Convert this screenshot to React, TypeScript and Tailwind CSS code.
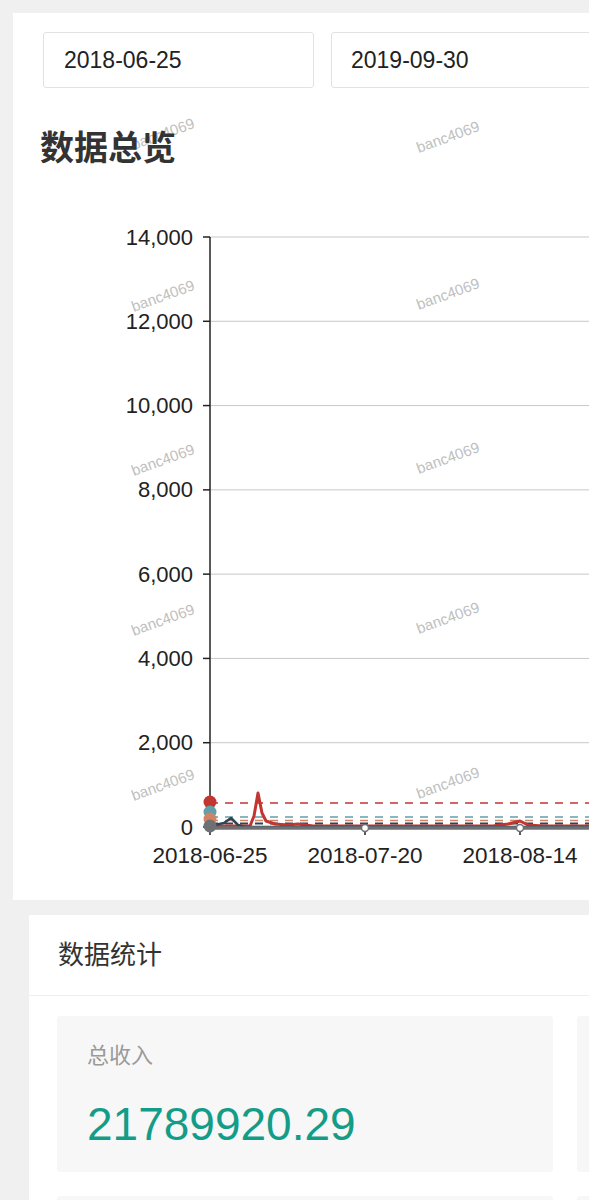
const font = "font-['Liberation_Sans','Noto_Sans_CJK_SC',sans-serif]";

const yTicks = [0, 2000, 4000, 6000, 8000, 10000, 12000, 14000];
const xLabels = ['2018-06-25', '2018-07-20', '2018-08-14'];

// chart geometry (svg coords)
const X0 = 197;
const Y0 = 661;
const PER = 590 / 14000;
const yOf = (v: number) => Y0 - v * PER;

const marks = [
  'left-[117px] top-[112px]',
  'left-[402px] top-[115px]',
  'left-[117px] top-[274px]',
  'left-[402px] top-[272px]',
  'left-[117px] top-[438px]',
  'left-[402px] top-[436px]',
  'left-[117px] top-[598px]',
  'left-[402px] top-[596px]',
  'left-[117px] top-[763px]',
  'left-[402px] top-[761px]',
];

function Chart() {
  return (
    <svg width={1000} height={734} className="-ml-[30px] block" fontFamily="Liberation Sans, Arial, sans-serif">
      {yTicks.map((v) => (
        <g key={v}>
          {v > 0 && <line x1={X0} x2={1000} y1={yOf(v)} y2={yOf(v)} stroke="#c8c8c8" strokeWidth={1} />}
          <line x1={X0 - 7} x2={X0} y1={yOf(v)} y2={yOf(v)} stroke="#222" strokeWidth={1.5} />
          <text x={180} y={yOf(v)} textAnchor="end" dominantBaseline="central" fontSize={22} fill="#222">
            {v.toLocaleString('en-US')}
          </text>
        </g>
      ))}

      {/* average lines */}
      <line x1={X0} x2={1000} y1={637} y2={637} stroke="#c23531" strokeWidth={1.5} strokeDasharray="8 7" />
      <line x1={X0} x2={1000} y1={651} y2={651} stroke="#61a0a8" strokeWidth={1.5} strokeDasharray="8 7" />
      <line x1={X0} x2={1000} y1={654.5} y2={654.5} stroke="#d48265" strokeWidth={1.5} strokeDasharray="8 7" />
      <line x1={X0} x2={1000} y1={657.5} y2={657.5} stroke="#2f4554" strokeWidth={2} strokeDasharray="8 7" />

      {/* series */}
      <path d="M197,660 L237,660 L241,650 L245,627 L249,647 L253,655 L262,658 L275,659 L285,658 L300,660 L480,660 L495,658 L507,655 L515,659 L530,660 L1000,660" fill="none" stroke="#c23531" strokeWidth={3} strokeLinejoin="round" />
      <path d="M197,660 L211,657 L218,652 L225,659 L232,661 L1000,661" fill="none" stroke="#2f4554" strokeWidth={2.5} strokeLinejoin="round" />
      <line x1={X0} x2={1000} y1={Y0 + 1} y2={Y0 + 1} stroke="#6e7074" strokeWidth={3.5} />

      {/* y axis */}
      <line x1={X0} x2={X0} y1={yOf(14000)} y2={Y0 + 8} stroke="#222" strokeWidth={1.5} />

      {/* start points */}
      <circle cx={X0} cy={636} r={6.5} fill="#c23531" />
      <circle cx={X0} cy={646} r={6.5} fill="#61a0a8" />
      <circle cx={X0} cy={653} r={6.5} fill="#d48265" />
      <circle cx={X0} cy={660} r={6.5} fill="#6e7074" />

      {xLabels.map((l, i) => {
        const x = X0 + i * 155;
        return (
          <g key={l}>
            {i > 0 && (
              <>
                <line x1={x} x2={x} y1={Y0} y2={Y0 + 8} stroke="#222" strokeWidth={1.5} />
                <circle cx={x} cy={Y0 + 1} r={3.5} fill="#fff" stroke="#6e7074" strokeWidth={1.5} />
              </>
            )}
            <text x={x} y={689} textAnchor="middle" dominantBaseline="central" fontSize={22.5} fill="#222">
              {l}
            </text>
          </g>
        );
      })}
    </svg>
  );
}

function Stat({ label, value }: { label: string; value: string }) {
  return (
    <div className="h-[156px] rounded-[3px] bg-[#f7f7f7] pl-[30px] pt-[27px]">
      <div className="text-[22px] leading-[26px] text-[#999]">{label}</div>
      <div className="mt-[32px] text-[46px] leading-none font-light text-[#139c87]">{value}</div>
    </div>
  );
}

export default function App() {
  return (
    <div className={`min-h-screen w-full overflow-hidden bg-[#f0f0f0] pt-[13px] pb-10 ${font}`}>
      <div className="relative ml-[13px] w-[1000px] bg-white pl-[30px] pt-[19px]">
        {marks.map((m) => (
          <span
            key={m}
            className={`pointer-events-none absolute ${m} -rotate-[20deg] text-[15px] leading-[18px] text-[#c0c0c0]`}
          >
            banc4069
          </span>
        ))}

        <div className="flex gap-[17px]">
          <div className="flex h-[56px] w-[271px] items-center rounded-[3px] border border-[#e2e2e2] pl-[20px] text-[23px] text-[#222]">
            2018-06-25
          </div>
          <div className="flex h-[56px] w-[271px] items-center rounded-[3px] border border-[#e2e2e2] pl-[19px] text-[23px] text-[#222]">
            2019-09-30
          </div>
        </div>

        <h1 className="relative -ml-[3px] mt-[42px] h-[36px] text-[34px] leading-[36px] font-bold text-[#333]">
          数据总览
        </h1>

        <Chart />
      </div>

      <div className="ml-[29px] mt-[15px] w-[1000px] bg-white">
        <div className="flex h-[81px] items-center border-b border-[#eeeeee] pl-[29px] text-[26px] text-[#333]">
          数据统计
        </div>
        <div className="grid grid-cols-[496px_496px] gap-[24px] px-[28px] pt-[20px] pb-[24px]">
          <Stat label="总收入" value="21789920.29" />
          <Stat label="总支出" value="1520364.80" />
          <Stat label="订单数" value="86231" />
          <Stat label="用户数" value="12046" />
        </div>
      </div>
    </div>
  );
}
